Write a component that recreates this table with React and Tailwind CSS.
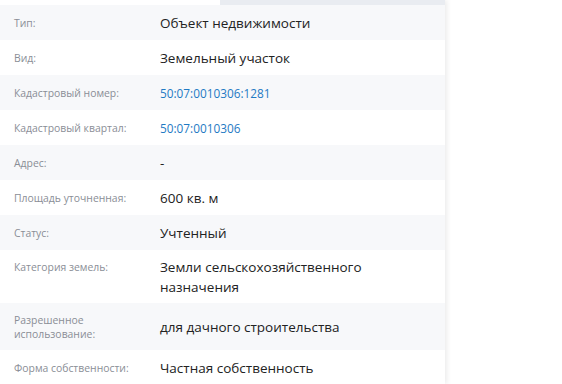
import React from "react";

const rows = [
  { label: "Тип:", value: "Объект недвижимости", h: "h-[35px]" },
  { label: "Вид:", value: "Земельный участок", h: "h-[35px]" },
  { label: "Кадастровый номер:", value: "50:07:0010306:1281", link: true, h: "h-[35px]" },
  { label: "Кадастровый квартал:", value: "50:07:0010306", link: true, h: "h-[35px]" },
  { label: "Адрес:", value: "-", h: "h-[35px]" },
  { label: "Площадь уточненная:", value: "600 кв. м", h: "h-[35px]" },
  { label: "Статус:", value: "Учтенный", h: "h-[35px]" },
  { label: "Категория земель:", value: "Земли сельскохозяйственного назначения", h: "h-[53px]", top: true },
  { label: "Разрешенное использование:", value: "для дачного строительства", h: "h-[47px]" },
  { label: "Форма собственности:", value: "Частная собственность", h: "h-[35px]" },
];

export default function App() {
  return (
    <div className="w-[562px] h-[384px] overflow-hidden bg-white" style={{ fontFamily: '"Open Sans", "Noto Sans", sans-serif' }}>
      <div className="w-[445px] h-full bg-white shadow-[2px_0_5px_rgba(0,0,0,0.08)]">
        <div className="flex h-[5px]">
          <div className="w-[220px] bg-white" />
          <div className="flex-1 bg-[#e9ecf1]" />
        </div>
        {rows.map((r, i) => (
          <div
            key={i}
            className={`flex ${r.h} ${r.top ? "items-start pt-[7px]" : "items-center"} ${i % 2 === 0 ? "bg-[#f7f8fa]" : "bg-white"}`}
          >
            <div className={`w-[160px] shrink-0 pl-[14px] pr-2 text-[10.4px] leading-[14px] text-[#8a8e96] ${r.top ? "pt-[3px]" : ""}`}>
              {r.label}
            </div>
            <div className={`w-[220px] leading-[20px] ${r.link ? "text-[#1f7ac4] text-[11.8px]" : "text-[#222222] text-[13.5px]"}`}>
              {r.value}
            </div>
          </div>
        ))}
      </div>
    </div>
  );
}
